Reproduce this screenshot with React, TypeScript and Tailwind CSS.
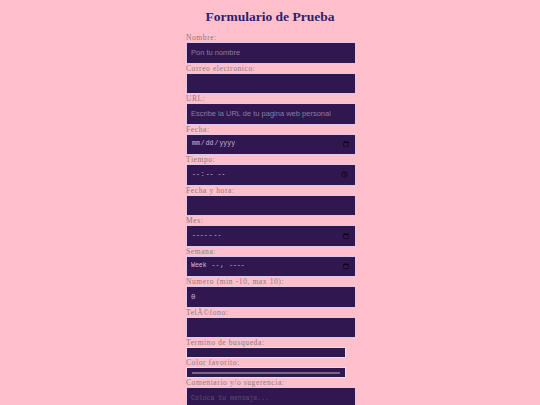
export default function App() {
  const label =
    "block h-[9px] text-[7.5px] leading-[9px] tracking-[0.6px] text-[#857a7c] font-['Liberation_Serif',serif]";
  const field =
    "block w-[170px] h-[21.5px] px-[4px] bg-[#30174f] border border-[#d9c9ee] text-[#cbbde2] outline-none placeholder:text-[#8b7ca3]";
  const sans = "text-[7.5px] font-['Liberation_Sans',sans-serif]";
  const mono = "text-[6.5px] font-['Liberation_Mono',monospace]";

  return (
    <div className="min-h-screen bg-[#ffc0cb] pt-[9px]">
      <h1 className="text-center text-[13.5px] leading-[16px] font-bold text-[#2b1f72] font-['Liberation_Serif',serif]">
        Formulario de Prueba
      </h1>

      <form lang="en-US" className="mx-auto mt-[8px] w-[170px] translate-x-[1px]">
        <label className={label}>Nombre:</label>
        <input
          type="text"
          placeholder="Pon tu nombre"
          className={`${field} ${sans} border-[#140a24]`}
        />

        <label className={label}>Correo electronico:</label>
        <input type="email" className={`${field} ${sans}`} />

        <label className={label}>URL:</label>
        <input
          type="url"
          placeholder="Escribe la URL de tu pagina web personal"
          className={`${field} ${sans}`}
        />

        <label className={label}>Fecha:</label>
        <input type="date" className={`${field} ${mono}`} />

        <label className={label}>Tiempo:</label>
        <input type="time" className={`${field} ${mono}`} />

        <label className={label}>Fecha y hora:</label>
        <input type="text" className={`${field} ${mono}`} />

        <label className={label}>Mes:</label>
        <input type="month" className={`${field} ${mono}`} />

        <label className={label}>Semana:</label>
        <input type="week" className={`${field} ${mono}`} />

        <label className={label}>Numero (min -10, max 10):</label>
        <input
          type="number"
          min={-10}
          max={10}
          defaultValue={0}
          className={`${field} text-[7.5px] font-['Liberation_Mono',monospace]`}
        />

        <label className={label}>TelÃ©fono:</label>
        <input type="tel" className={`${field} ${sans}`} />

        <label className={label}>Termino de busqueda:</label>
        <input
          type="search"
          className="block w-[160px] h-[11px] bg-[#30174f] border border-[#e6dbf5] outline-none"
        />

        <label className={label}>Color favorito:</label>
        <div className="flex h-[11px] w-[160px] items-center bg-[#30174f] border border-[#e6dbf5] px-[5px]">
          <div className="h-[2px] w-full bg-[#76697f]" />
        </div>

        <label className={label}>Comentario y/o sugerencia:</label>
        <textarea
          placeholder="Coloca tu mensaje..."
          className={`block w-[170px] h-[40px] px-[4px] py-[6px] resize-none bg-[#30174f] border border-[#d9c9ee] text-[#cbbde2] outline-none placeholder:text-[#5f5078] ${mono}`}
        />
      </form>
    </div>
  );
}
